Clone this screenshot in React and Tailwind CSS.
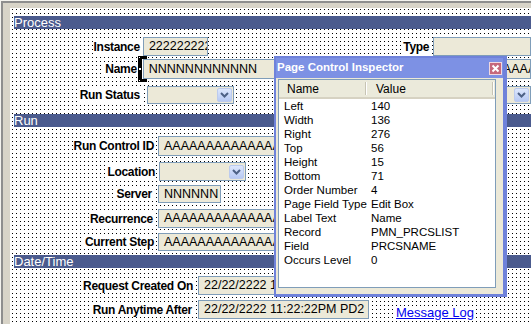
import React from "react";

function Label({ children }) {
  return (
    <span className="bg-white font-bold text-[12px] tracking-[-0.3px] leading-[14px] px-[1px] text-black whitespace-nowrap">
      {children}
    </span>
  );
}

function Box({ cls, children }) {
  return (
    <div
      className={
        "box-border border border-[#7f9db9] bg-[#ece9d8] overflow-hidden whitespace-nowrap text-[12.5px] leading-none flex items-center pl-[5px] text-black " +
        cls
      }
    >
      {children}
    </div>
  );
}

function Drop({ cls }) {
  return (
    <div
      className={
        "box-border border border-[#7f9db9] bg-[#ece9d8] flex items-center justify-end pr-[1px] " +
        cls
      }
    >
      <div className="w-[15px] h-[14px] rounded-[2px] bg-gradient-to-b from-[#dde7fd] to-[#b7c9f3] border border-[#bccbee] flex items-center justify-center">
        <svg width="9" height="6" viewBox="0 0 9 6">
          <path d="M1 1 L4.5 4.5 L8 1" stroke="#4d6185" strokeWidth="2" fill="none" />
        </svg>
      </div>
    </div>
  );
}

function Header({ cls, children }) {
  return (
    <div
      className={
        "ml-[4px] h-[13px] bg-[#4b5b8e] text-white text-[13px] leading-[13px] whitespace-nowrap overflow-hidden " +
        cls
      }
    >
      {children}
    </div>
  );
}

const rows = [
  ["Left", "140"],
  ["Width", "136"],
  ["Right", "276"],
  ["Top", "56"],
  ["Height", "15"],
  ["Bottom", "71"],
  ["Order Number", "4"],
  ["Page Field Type", "Edit Box"],
  ["Label Text", "Name"],
  ["Record", "PMN_PRCSLIST"],
  ["Field", "PRCSNAME"],
  ["Occurs Level", "0"],
];

export default function App() {
  return (
    <div className="relative w-[531px] h-[324px] overflow-hidden bg-[#f4f3ee] pl-[1px] pt-[1px] font-['Liberation_Sans',Arial,sans-serif]">
      <div className="h-full border-l-2 border-t-2 border-[#8e8e8e] bg-[#d8d4c8] pl-[7px] pt-[5px]">
        <div className="h-full bg-white bg-[conic-gradient(from_270deg_at_1px_1px,#000_90deg,transparent_0)] bg-size-[4px_4px] bg-position-[2px_1px] flex flex-col">
          {/* Process */}
          <Header cls="mt-[8px]">Process</Header>

          <div className="flex items-center h-[19px] mt-[8px]">
            <div className="w-[134px] flex justify-end">
              <Label>Instance</Label>
            </div>
            <Box cls="ml-[2px] w-[67px] h-[19px] pl-[4px]">222222222</Box>
            <div className="w-[227px] flex justify-end">
              <Label>Type</Label>
            </div>
            <Box cls="ml-[3px] w-[100px] h-[19px]"></Box>
          </div>

          <div className="flex items-center h-[20px] mt-[3px]">
            <div className="w-[131px] flex justify-end">
              <Label>Name</Label>
            </div>
            <div className="relative ml-[5px]">
              <Box cls="w-[150px] h-[20px] pl-[5px]">NNNNNNNNNNNN</Box>
              <div className="absolute left-[-5px] top-[-3px] w-[9px] h-[26px]">
                <div className="absolute left-0 top-0 w-[4px] h-[26px] bg-black"></div>
                <div className="absolute left-0 top-0 w-[9px] h-[3px] bg-black"></div>
                <div className="absolute left-0 bottom-0 w-[9px] h-[3px] bg-black"></div>
                <div className="absolute left-[1px] top-[1px] w-[1px] h-[1px] bg-white"></div>
                <div className="absolute left-[1px] top-[12px] w-[2px] h-[2px] bg-white"></div>
                <div className="absolute left-[1px] bottom-[1px] w-[1px] h-[1px] bg-white"></div>
              </div>
            </div>
            <Box cls="ml-[4px] w-[240px] h-[20px]">AAAAAAAAAAAAAAAAAAAAAAAAAAAAAAAAAA</Box>
          </div>

          <div className="flex items-center h-[18px] mt-[7px]">
            <div className="w-[131px] flex justify-end">
              <Label>Run Status</Label>
            </div>
            <Drop cls="ml-[6px] w-[87px] h-[18px]" />
            <Drop cls="ml-[186px] w-[111px] h-[18px]" />
          </div>

          {/* Run */}
          <Header cls="mt-[10px]">Run</Header>

          <div className="flex items-center h-[20px] mt-[9px]">
            <div className="w-[145px] flex justify-end">
              <Label>Run Control ID</Label>
            </div>
            <Box cls="ml-[3px] w-[200px] h-[20px]">AAAAAAAAAAAAAAAAAAAAAAAAAAAAAA</Box>
          </div>

          <div className="flex items-center h-[19px] mt-[6px]">
            <div className="w-[146px] flex justify-end">
              <Label>Location</Label>
            </div>
            <Drop cls="ml-[3px] w-[87px] h-[19px]" />
          </div>

          <div className="flex items-center h-[18px] mt-[4px]">
            <div className="w-[143px] flex justify-end">
              <Label>Server</Label>
            </div>
            <Box cls="ml-[5px] w-[63px] h-[18px]">NNNNNN</Box>
          </div>

          <div className="flex items-center h-[19px] mt-[6px]">
            <div className="w-[144px] flex justify-end">
              <Label>Recurrence</Label>
            </div>
            <Box cls="ml-[4px] w-[200px] h-[19px]">AAAAAAAAAAAAAAAAAAAAAAAAAAAAAA</Box>
          </div>

          <div className="flex items-center h-[18px] mt-[5px]">
            <div className="w-[145px] flex justify-end">
              <Label>Current Step</Label>
            </div>
            <Box cls="ml-[3px] w-[200px] h-[18px]">AAAAAAAAAAAAAAAAAAAAAAAAAAAAAA</Box>
          </div>

          {/* Date/Time */}
          <Header cls="mt-[4px]">Date/Time</Header>

          <div className="flex items-center h-[19px] mt-[8px]">
            <div className="w-[184px] flex justify-end">
              <Label>Request Created On</Label>
            </div>
            <Box cls="ml-[4px] w-[200px] h-[19px]">22/22/2222 11:22:22PM PD2</Box>
          </div>

          <div className="flex items-center h-[19px] mt-[5px]">
            <div className="w-[183px] flex justify-end">
              <Label>Run Anytime After</Label>
            </div>
            <Box cls="ml-[5px] w-[171px] h-[19px]">22/22/2222 11:22:22PM PD2</Box>
            <span className="ml-[27px] mt-[6px] bg-white text-[13px] leading-[14px] text-[#0000ee] underline whitespace-nowrap">
              Message Log
            </span>
          </div>
        </div>
      </div>

      {/* Page Control Inspector */}
      <div className="absolute left-[274px] top-[56px] w-[233px] h-[241px] box-border border-l-2 border-t-2 border-r-4 border-b-[3px] border-[#6f82da] flex flex-col bg-[#ece9d8]">
        <div className="h-[20px] bg-[#7d91e4] flex items-center justify-between pl-[1px] pr-[1px]">
          <span className="text-white font-bold text-[11.5px] leading-none whitespace-nowrap">
            Page Control Inspector
          </span>
          <div className="w-[13px] h-[13px] bg-[#c5687c] border border-[#f0d8e0] flex items-center justify-center">
            <svg width="9" height="9" viewBox="0 0 9 9">
              <path d="M1.5 1.5 L7.5 7.5 M7.5 1.5 L1.5 7.5" stroke="#fff" strokeWidth="2" />
            </svg>
          </div>
        </div>
        <div className="flex-1 pt-[1px] pl-[2px] pr-[7px] pb-[6px] flex">
          <div className="flex-1 box-border border border-[#7f9db9] bg-white flex flex-col overflow-hidden">
            <div className="h-[19px] shrink-0 bg-[#ebeadb] border-b-2 border-[#d6d2c2] flex items-center text-[12px] text-black">
              <div className="w-[86px] pl-[8px]">
                <span>Name</span>
              </div>
              <div className="w-[2px] h-[13px] border-l border-[#c7c4b4] border-r border-r-white"></div>
              <div className="flex-1 pl-[9px]">Value</div>
              <div className="w-[2px] h-[13px] border-l border-[#c7c4b4] border-r border-r-white mr-[1px]"></div>
            </div>
            <div className="flex flex-col text-[11.5px] leading-[14px] text-black">
              {rows.map(([k, v]) => (
                <div key={k} className="flex h-[14px] whitespace-nowrap">
                  <div className="w-[92px] pl-[5px]">{k}</div>
                  <div>{v}</div>
                </div>
              ))}
            </div>
          </div>
        </div>
      </div>
    </div>
  );
}
